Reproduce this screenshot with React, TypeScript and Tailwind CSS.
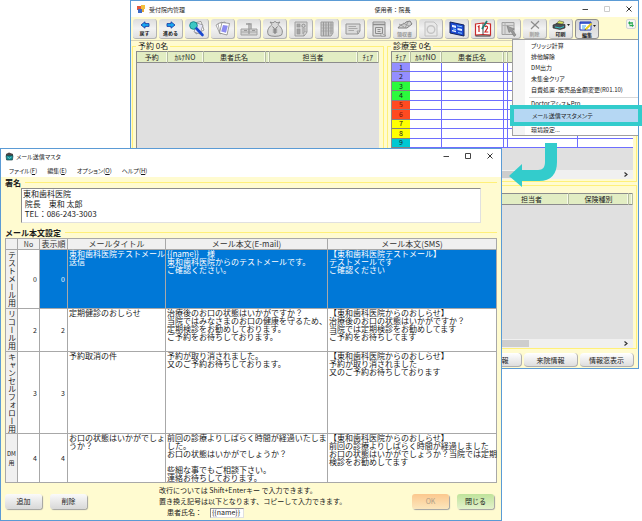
import type { ReactNode } from "react";
import clsx from "clsx";

/* ---------- toolbar icons ---------- */

const Icon = ({ children, w = 20, h = 18 }: { children: ReactNode; w?: number; h?: number }) => (
  <svg width={w} height={h} viewBox={`0 0 ${w} ${h}`} fill="none" aria-hidden="true">
    {children}
  </svg>
);

const ArrowIcon = ({ flip }: { flip?: boolean }) => (
  <Icon w={12} h={8}>
    <g transform={flip ? "translate(12 0) scale(-1 1)" : undefined}>
      <path d="M2 4 L6 .8 V2.6 H10 V5.4 H6 V7.2 Z" fill="#18a8f0" stroke="#1c3fa8" strokeWidth=".9" />
    </g>
  </Icon>
);

const SearchDocIcon = () => (
  <Icon>
    <path d="M7 3 L14 1.5 L17 10 L9 14 Z" fill="#fff" stroke="#777" strokeWidth=".7" />
    <path d="M10 3 L16 5 L13 14 L7 12 Z" fill="#e4e4f8" stroke="#888" strokeWidth=".7" />
    <circle cx="6.5" cy="5.5" r="3.8" fill="#3cc8c4" stroke="#17888c" />
    <path d="M9.5 8.5 L15.5 15" stroke="#1b49cf" strokeWidth="2.6" strokeLinecap="round" />
  </Icon>
);

const DocsIcon = () => (
  <Icon>
    <path d="M3 5 L9 2 L13 11 L7 14 Z" fill="#fff" stroke="#888" strokeWidth=".7" />
    <path d="M5 3.5 L12 2 L14 12 L7 13.5 Z" fill="#fff" stroke="#888" strokeWidth=".7" />
    <path d="M9 2.5 L16.5 3.5 L14 15 L6.5 13 Z" fill="#fff" stroke="#777" strokeWidth=".7" />
    <path d="M10 5 L14.8 5.8 L13 12.8 L8.2 11.6 Z" fill="#8b8bf0" />
  </Icon>
);

const TrayIcon = () => (
  <Icon>
    <path d="M2 9 H18 V15 H2 Z" fill="#d2d2d2" stroke="#a2a2a2" />
    <path d="M2 12 H18" stroke="#a8a8a8" />
    <path d="M10 3 V14 M7 4 H12 V9" stroke="#9c9c9c" strokeWidth="1.4" />
    <path d="M5 10.5 H8 M13 10.5 H16" stroke="#999" />
  </Icon>
);

const MoneyIcon = () => (
  <Icon>
    <path d="M7 4.5 L5 2 L8 2.8 L10 1.4 L12 2.8 L15 2 L13 4.5 C17 8 18.5 11 16.5 15 C14 16.8 6 16.8 3.5 15 C1.5 11 3 8 7 4.5 Z" fill="#d8d8d8" stroke="#858585" strokeWidth=".9" />
    <path d="M7.5 6.5 L10 9.6 L12.5 6.5 M10 9.6 V14 M7.8 10 H12.2 M7.8 12 H12.2" stroke="#777" />
  </Icon>
);

const FormIcon = () => (
  <Icon>
    <path d="M4 2 H16 V12 L13 16 H4 Z" fill="#d4d4d4" stroke="#a0a0a0" />
    <path d="M6 4 H9 V7 H6 Z M6 9 H9 V14 H6 Z" fill="#a4a4a4" stroke="#909090" strokeWidth=".6" />
    <circle cx="12.5" cy="5.8" r="1.6" stroke="#909090" />
    <path d="M11 9 H14.5 M11 11 H14.5 M11 13 H13" stroke="#999" />
    <path d="M13 16 L16 12 H13 Z" fill="#f0f0f0" stroke="#8c8c8c" strokeWidth=".6" />
  </Icon>
);

const ListIcon = () => (
  <Icon>
    <path d="M4 2 H16 V13 L14 16 H4 Z" fill="#c8c8c8" stroke="#9c9c9c" />
    <path d="M6.5 2 V16 M9 2 V16 M11.5 2 V16 M14 2 V14" stroke="#999" />
    <path d="M4 5 H16 M4 8 H16 M4 11 H16" stroke="#a0a0a0" strokeWidth=".6" />
  </Icon>
);

const CardIcon = () => (
  <Icon>
    <path d="M3 4 H17 V11 L15 14 H3 Z" fill="#dadada" stroke="#959595" />
    <path d="M5.5 6.5 H13 M5.5 8.5 H14.5 M5.5 10.5 H11" stroke="#9c9c9c" strokeWidth=".8" />
    <path d="M17 11 H14 L15 14" stroke="#8a8a8a" strokeWidth=".7" />
  </Icon>
);

const ReportIcon = () => (
  <Icon>
    <path d="M4 2 H16 V16 H4 Z" fill="#dcdcdc" stroke="#8c8c8c" />
    <path d="M4 4.5 H16" stroke="#8c8c8c" strokeWidth="1.6" />
    <path d="M6.5 7.5 H13.5 V13.5 H6.5 Z M8.5 9.5 H11.5 M8.5 11.5 H11.5" stroke="#8c8c8c" />
    <path d="M12 13 L17 16 H12 Z" fill="#eee" stroke="#888" strokeWidth=".6" />
  </Icon>
);

const ReceiptIcon = () => (
  <Icon h={10}>
    <path d="M3 8 C6 3 9 5 11 2 L15 1 L17 4 L12 8 Z" fill="#d0d0d0" stroke="#808080" />
    <path d="M4 4 L9 7 M8 3 L14 6 M13 2 L10 8" stroke="#909090" strokeWidth=".8" />
  </Icon>
);

const BlankDocIcon = () => (
  <Icon>
    <path d="M4 2 H13 L16 5 V16 H4 Z" fill="#e8e8e8" stroke="#c0c0c0" />
    <circle cx="10" cy="9.5" r="3.8" stroke="#c4c4c4" strokeWidth="1.4" />
  </Icon>
);

const ScreenIcon = () => (
  <Icon>
    <path d="M3 2 L17 5 V16 L3 13 Z" fill="#1c4ad0" stroke="#14245c" />
    <path d="M5 4.8 L9 5.7 V8 L5 7.1 Z M10.5 8 L15 9 V11 L10.5 10 Z M5 10 L9 10.8 V12.2 L5 11.3 Z" fill="#e6f0ff" />
    <path d="M10 5.8 L15 6.8 M6 9 L9 9.5 M11 12.5 L15 13.3" stroke="#7fc8ff" />
  </Icon>
);

const CalendarIcon = () => (
  <Icon>
    <path d="M2.5 4 L10 3 L17.5 4 V15 L10 14.5 L2.5 15 Z" fill="#fff" stroke="#c92a2a" strokeWidth="1.2" />
    <path d="M10 3.5 V14.5" stroke="#444" />
    <path d="M4.8 7 L6 6 V12 M12 7 C12.5 5.5 15 6 14.5 8 L12 12 H15.3" stroke="#c92020" strokeWidth="1.2" />
    <path d="M14 1 L9 9" stroke="#207f74" strokeWidth="1.7" />
    <path d="M2.5 16 H17.5" stroke="#333" />
  </Icon>
);

const PointerIcon = () => (
  <Icon>
    <path d="M3 2.5 H15 V14.5 H3 Z" fill="#d8d8d8" stroke="#a0a0a0" />
    <path d="M3 5.5 H15 M6 2.5 V14.5" stroke="#b0b0b0" />
    <path d="M8 6 L10 12.5 L11.8 11 L15 16.5 L17 15 L13.3 10 L15.3 9 Z" fill="#999" stroke="#777" strokeWidth=".6" />
  </Icon>
);

const CrossIcon = () => (
  <Icon w={12} h={10}>
    <path d="M2 1.5 L10 8.5 M10 1 L2 9" stroke="#8c8c8c" strokeWidth="1.2" />
  </Icon>
);

const PrinterIcon = () => (
  <Icon h={10}>
    <path d="M5 4 L8 .8 L13 2 L11 5 Z" fill="#d8e45c" stroke="#555" strokeWidth=".6" />
    <path d="M2 5 L6 3.5 L14 4.5 V8 L9 9.5 L2 8 Z" fill="#4b5058" stroke="#222" strokeWidth=".6" />
    <path d="M4 7 L9 8 L13 6.5" stroke="#32c4c4" />
    <path d="M16 4 H19 L17.5 6 Z" fill="#222" />
  </Icon>
);

const EditIcon = () => (
  <Icon h={10}>
    <path d="M3 1 H14 V9 H3 Z" fill="#fff" stroke="#1a3ac0" />
    <path d="M3 2 H14" stroke="#1a3ac0" strokeWidth="1.6" />
    <path d="M5 5 H9 M5 7 H8" stroke="#35a6ee" />
    <path d="M14.5 2.5 L8.5 8.5" stroke="#e8cc20" strokeWidth="2" />
    <path d="M9 9 L7.5 9.2 L8 8" fill="#222" />
    <path d="M16 4 H19 L17.5 6 Z" fill="#222" />
  </Icon>
);

const AppIcon = () => (
  <Icon w={8} h={8}>
    <path d="M0 1 H4 V5 H0 Z" fill="#e2573b" />
    <path d="M4 0 H8 V4 H4 Z" fill="#f2bf3b" />
    <path d="M1 4 H5 V8 H1 Z" fill="#3c69c6" />
    <path d="M5 4 H7 V7 H5 Z" fill="#e9a93a" />
  </Icon>
);

const MailIcon = () => (
  <Icon w={9} h={9}>
    <path d="M1 2 L4 .6 L8 2 V4 H1 Z" fill="#4d4444" />
    <path d="M1 3.6 H8 L7.4 8 H1.6 Z" fill="#138a91" stroke="#1d4448" strokeWidth=".7" />
    <path d="M2.5 5 L4.5 6.4 L6.5 5" stroke="#7ce0e0" strokeWidth=".8" />
  </Icon>
);

/* ---------- shared data ---------- */

type Tool = { name: string; icon: ReactNode; label?: string; muted?: boolean; pressed?: boolean };

const tools: Tool[] = [
  { name: "戻す", icon: <ArrowIcon />, label: "戻す" },
  { name: "進める", icon: <ArrowIcon flip />, label: "進める" },
  { name: "検索", icon: <SearchDocIcon /> },
  { name: "カルテ", icon: <DocsIcon /> },
  { name: "受付", icon: <TrayIcon /> },
  { name: "会計", icon: <MoneyIcon /> },
  { name: "問診", icon: <FormIcon /> },
  { name: "一覧", icon: <ListIcon /> },
  { name: "カード", icon: <CardIcon /> },
  { name: "帳票", icon: <ReportIcon /> },
  { name: "領収書", icon: <ReceiptIcon />, label: "領収書", muted: true },
  { name: "文書", icon: <BlankDocIcon /> },
  { name: "画面", icon: <ScreenIcon /> },
  { name: "予約", icon: <CalendarIcon /> },
  { name: "選択", icon: <PointerIcon /> },
  { name: "削除", icon: <CrossIcon />, label: "削除", muted: true },
  { name: "印刷", icon: <PrinterIcon />, label: "印刷" },
  { name: "編集", icon: <EditIcon />, label: "編集", pressed: true },
];

const chairs = [
  "bg-[#948eff]",
  "bg-[#948eff]",
  "bg-[#2bfa3c]",
  "bg-[#2bfa3c]",
  "bg-[#ff4a20] text-[#7a1000]",
  "bg-[#ff4a20] text-[#7a1000]",
  "bg-[#ffff00]",
  "bg-[#ffff00]",
  "bg-[#00c8d2]",
];

const mails = [
  {
    kind: "テストメール用",
    no: 0,
    height: "h-[59px]",
    title: "東和歯科医院テストメール\n送信",
    email: "{{name}}　様\n東和歯科医院からのテストメールです。\nご確認ください。",
    sms: "【東和歯科医院テストメール】\nテストメールです\nご確認ください",
  },
  {
    kind: "リコール用",
    no: 2,
    height: "h-[43px]",
    title: "定期健診のおしらせ",
    email: "治療後のお口の状態はいかがですか？\n当院ではみなさまのお口の健康を守るため、\n定期検診をお勧めしております。\nご予約をお待ちしております。",
    sms: "【東和歯科医院からのおしらせ】\n治療後のお口の状態はいかがですか？\n当院では定期検診をお勧めしてます\nご予約をお待ちしてます",
  },
  {
    kind: "キャンセルフォロー用",
    no: 3,
    height: "h-[82px]",
    title: "予約取消の件",
    email: "予約が取り消されました。\n又のご予約お待ちしております。",
    sms: "【東和歯科医院からのおしらせ】\n予約が取り消されました\n又のご予約お待ちしております",
  },
  {
    kind: "DM用",
    no: 4,
    height: "h-[48px]",
    title: "お口の状態はいかがでしょ\nうか？",
    email: "前回の診療よりしばらく時間が経過いたしま\nした。\nお口の状態はいかがでしょうか？\n\n些細な事でもご相談下さい。\n連絡お待ちしております。",
    sms: "【東和歯科医院からのおしらせ】\n前回の診療よりしばらく時間が経過しました\nお口の状態はいかがでしょうか？当院では定期\n検診をお勧めしてます",
  },
];

/* ---------- small parts ---------- */

const WindowButtons = ({ dim }: { dim?: boolean }) => (
  <div className="flex gap-3">
    <button type="button" aria-label="最小化">
      <Icon w={10} h={8}>
        <path d="M2.5 4.5 H8" stroke="#444" />
      </Icon>
    </button>
    <button type="button" aria-label="最大化">
      <Icon w={10} h={8}>
        <path d="M2.5 1.5 H7.5 V6.5 H2.5 Z" stroke={dim ? "#ccc" : "#444"} />
      </Icon>
    </button>
    <button type="button" aria-label="閉じる">
      <Icon w={10} h={8}>
        <path d="M2.5 1.5 L7.5 6.5 M7.5 1.5 L2.5 6.5" stroke="#333" />
      </Icon>
    </button>
  </div>
);

const Scrollbar = ({ thumb }: { thumb: string }) => (
  <div className="flex h-[9px] items-center bg-[#f0f0f0]">
    <div className={clsx("h-[7px] bg-[#cdcdcd]", thumb)} />
    <svg width="6" height="7" viewBox="0 0 6 7" fill="none" className="ml-auto mr-1">
      <path d="M1.5 1.5 L4 3.5 L1.5 5.5" stroke="#333" strokeWidth="1.2" />
    </svg>
  </div>
);

const Th = ({ children }: { children?: ReactNode }) => (
  <th className="overflow-hidden border-r border-[#b4bca0] p-0 font-normal shadow-[inset_-1px_0_0_#f6fae8]">{children}</th>
);

const headRow = "h-[11px] border-b border-t border-[#8c8c8c] bg-[#e2edc3]";

const BottomTab = ({ children }: { children: ReactNode }) => (
  <button
    type="button"
    className="h-[14px] w-[54px] rounded-sm border-b border-r border-[#b0b0b0] bg-linear-to-b from-white to-[#dedede] text-[7px] leading-[12px]"
  >
    {children}
  </button>
);

const PushButton = ({ children, tone = "gray" }: { children: ReactNode; tone?: "gray" | "orange" | "green" }) => (
  <button
    type="button"
    disabled={tone === "orange"}
    className={clsx(
      "h-[15px] w-[37px] rounded-[3px] bg-linear-to-b text-[7px] leading-[13px] shadow-[1px_1px_1px_#a0a0a0]",
      tone === "gray" && "from-[#fafafa] to-[#d8d8d8]",
      tone === "orange" && "from-[#fcc88e] to-[#fbe6bc] text-[#b0a088]",
      tone === "green" && "from-[#bfe39a] to-[#e4f2cc]",
    )}
  >
    {children}
  </button>
);

/* ---------- reception window ---------- */

const Toolbar = () => (
  <div className="flex h-6 items-start gap-[2px] border-b border-[#d6d2b4] bg-[#fffbd0] pl-[2px] pt-[2px]">
    {tools.map((tool) => (
      <button
        key={tool.name}
        type="button"
        aria-label={tool.name}
        className={clsx(
          "flex h-5 w-6 shrink-0 flex-col items-center justify-center overflow-hidden rounded-[3px] border-b border-r bg-linear-to-b",
          tool.pressed ? "border border-[#909090] from-[#d4d4d4] to-[#e8e8e8]" : "border-[#b4b4b4] from-[#dcdcdc] via-[#f2f2f2] to-[#e0e0e0]",
        )}
      >
        {tool.icon}
        {tool.label && (
          <span className={clsx("text-[5px] font-bold leading-[7px] whitespace-nowrap", tool.muted && "text-[#999]")}>{tool.label}</span>
        )}
      </button>
    ))}
    <button type="button" aria-label="更新" className="ml-auto mr-[2px] rounded-[2px] border border-[#d4d4d4] bg-[#f5f5f5]">
      <Icon w={8} h={8}>
        <path d="M1 3 L3 1 V2.2 H6 V3.8 H3 V5 Z M7 5.5 L5 3.8 V4.8 H2.5 V6.2 H5 V7.2 Z" fill="#25a84c" />
      </Icon>
    </button>
  </div>
);

const ReservationTable = () => (
  <fieldset className="flex w-[252px] flex-col border border-[#fff07a] pb-1 pl-[3px] pr-1">
    <legend className="px-[2px] text-[8px] leading-[10px]">予約 0名</legend>
    <div className="flex-1 border-l border-[#8c8c8c] bg-[#e0e0e0]">
      <table className="w-full table-fixed border-collapse text-[7px] leading-[9px]">
        <colgroup>
          <col className="w-[30px]" />
          <col className="w-[36px]" />
          <col className="w-[62px]" />
          <col className="w-[4px]" />
          <col className="w-[88px]" />
          <col />
        </colgroup>
        <thead>
          <tr className={headRow}>
            <Th>予約</Th>
            <Th>ｶﾙﾃNO</Th>
            <Th>患者氏名</Th>
            <Th />
            <Th>担当者</Th>
            <Th>ﾁｪｱ</Th>
          </tr>
        </thead>
      </table>
    </div>
  </fieldset>
);

const ChairTable = () => (
  <fieldset className="flex flex-1 flex-col border border-[#fff07a] pb-[2px] pl-[3px] pr-[3px]">
    <legend className="px-[2px] text-[8px] leading-[10px]">診療室 0名</legend>
    <div className="flex flex-1 flex-col border-l border-[#8c8c8c] bg-[#e0e0e0]">
      <table className="h-[97px] w-full table-fixed border-collapse text-[7px] leading-[7px]">
        <colgroup>
          <col className="w-[18px]" />
          <col className="w-[31px]" />
          <col className="w-[62px]" />
          <col className="w-[4px]" />
          <col className="w-[70px]" />
          <col />
        </colgroup>
        <thead>
          <tr className={headRow}>
            <Th>ﾁｪｱ</Th>
            <Th>ｶﾙﾃNO</Th>
            <Th>患者氏名</Th>
            <Th />
            <Th />
            <Th />
          </tr>
        </thead>
        <tbody>
          {chairs.map((color, i) => (
            <tr key={i} className="border-b border-[#6e6eff] bg-white">
              <th className={clsx("border-b border-[#808080] p-0 font-normal", color)}>{i + 1}</th>
              <td className="border-r border-[#6e6eff] p-0" />
              <td className="border-r border-[#6e6eff] p-0" />
              <td className="border-r border-[#6e6eff] p-0" />
              <td className="border-r border-[#6e6eff] p-0" />
              <td className="p-0" />
            </tr>
          ))}
        </tbody>
      </table>
      <div className="flex-1" />
      <Scrollbar thumb="w-[140px]" />
    </div>
  </fieldset>
);

const ReceptionWindow = () => (
  <section className="absolute left-[130px] right-[3px] top-0 flex flex-col border border-[#5b9bd5] bg-[#fffbd0]">
    <header className="flex h-4 items-center gap-1 bg-white pl-[6px] pr-1">
      <AppIcon />
      <h1 className="flex-1 text-[6px]">受付院内管理</h1>
      <p className="flex-1 pl-5 text-[6px]">使用者：院長</p>
      <WindowButtons dim />
    </header>
    <Toolbar />
    <div className="flex h-[141px] gap-[3px] px-[1px]">
      <ReservationTable />
      <ChairTable />
    </div>
    <div className="mx-[1px] mt-[3px] border border-[#fff07a] px-[3px] pt-[7px]">
      <div className="flex h-[155px] flex-col border-l border-[#8c8c8c] bg-[#e0e0e0]">
        <table className="w-full table-fixed border-collapse text-[7px] leading-[9px]">
          <colgroup>
            <col />
            <col className="w-[74px]" />
            <col className="w-[60px]" />
            <col className="w-[4px]" />
          </colgroup>
          <thead>
            <tr className={headRow}>
              <Th>患者氏名</Th>
              <Th>担当者</Th>
              <Th>保険種別</Th>
              <Th />
            </tr>
          </thead>
        </table>
        <div className="flex-1" />
        <Scrollbar thumb="w-[392px]" />
      </div>
    </div>
    <div className="flex justify-end gap-[2px] pb-[1px] pr-1 pt-1">
      <BottomTab>患者情報</BottomTab>
      <BottomTab>来院情報</BottomTab>
      <BottomTab>情報窓表示</BottomTab>
    </div>
  </section>
);

const EditMenu = () => (
  <>
    <ul className="absolute right-1 top-[39px] w-[126px] border border-r-0 border-[#a0a0a0] bg-white text-[6px] leading-[11px] shadow-[inset_12px_0_0_#f4f4f4] [font-feature-settings:'palt'] [&_button]:block [&_button]:h-[11px] [&_button]:pl-[18px]">
      <li><button type="button">ブリッジ計算</button></li>
      <li><button type="button">排他解除</button></li>
      <li><button type="button">DM出力</button></li>
      <li><button type="button">未集金クリア</button></li>
      <li><button type="button">自費処置･販売品金額変更(R01.10)</button></li>
      <li className="ml-4 mt-[2px] h-px bg-[#d8d8d8]" />
      <li><button type="button">DoctorアシストPro</button></li>
      {/* the framed entry covers the edges of its neighbours */}
      <li className="relative -ml-[3px] -mr-1 -mt-1 -mb-[2px] border-4 border-[#33cccc] bg-[#b5d7f3] py-[1px]">
        <button type="button">メール送信マスタメンテ</button>
      </li>
      <li><button type="button">環境設定...</button></li>
    </ul>
    <svg width="50" height="46" viewBox="0 0 50 46" className="absolute right-[84px] top-[142px]">
      <path d="M37 1 H49 V20 C49 32 43 39 31 39 H14 V45 L1 34 L14 22 V28 H30 C35 28 37 25 37 20 Z" fill="#33cccc" />
    </svg>
  </>
);

/* ---------- mail master window ---------- */

const SectionTitle = ({ children }: { children: ReactNode }) => (
  <div className="flex items-center gap-1">
    <h2 className="text-[8px] font-bold leading-[11px]">{children}</h2>
    <span className="h-px flex-1 bg-[#fff07a]" />
  </div>
);

const cell = "whitespace-pre border border-[#a8a8a8] p-0 pl-[1px] align-top";

const MailTable = () => (
  <table className="w-full table-fixed border-collapse border-l border-t border-[#8c8c8c] bg-white text-[8px] leading-[8px]">
    <colgroup>
      <col className="w-[12px]" />
      <col className="w-[22px]" />
      <col className="w-[28px]" />
      <col className="w-[98px]" />
      <col className="w-[162px]" />
      <col />
    </colgroup>
    <thead>
      <tr className="h-[11px] bg-[#f0f0f0] text-[#333] [&>th]:border [&>th]:border-[#a8a8a8] [&>th]:p-0 [&>th]:font-normal">
        <th />
        <th className="text-[7px]">No</th>
        <th>表示順</th>
        <th>メールタイトル</th>
        <th>メール本文(E-mail)</th>
        <th>メール本文(SMS)</th>
      </tr>
    </thead>
    <tbody>
      {mails.map((mail) => {
        const selected = mail.no === 0;
        return (
          <tr key={mail.no} className={mail.height}>
            <th className="border border-[#a8a8a8] bg-[#f0f0f0] p-0 font-normal">
              {mail.kind === "DM用" ? (
                <span className="block text-[6px] leading-[9px]">
                  DM
                  <br />用
                </span>
              ) : (
                <span className="inline-block whitespace-nowrap align-middle [writing-mode:vertical-rl]">{mail.kind}</span>
              )}
            </th>
            <td className="border border-[#a8a8a8] p-0 pr-[2px] text-right text-[7px]">{mail.no}</td>
            <td className={clsx("border border-[#a8a8a8] p-0 pr-[2px] text-right text-[7px]", selected && "bg-[#0078d7] text-white")}>{mail.no}</td>
            <td className={clsx(cell, selected && "bg-[#0078d7] text-white")}>{mail.title}</td>
            <td className={clsx(cell, selected && "bg-[#0078d7] text-white")}>{mail.email}</td>
            <td className={clsx(cell, selected && "bg-[#0078d7] text-white")}>{mail.sms}</td>
          </tr>
        );
      })}
    </tbody>
  </table>
);

const MailWindow = () => (
  <section className="absolute left-0 top-[148px] w-[502px] border border-[#5b9bd5] bg-[#fffbd0]">
    <div className="bg-white [font-feature-settings:'palt']">
      <header className="flex h-[14px] items-center gap-[2px] pl-1 pr-[6px]">
        <MailIcon />
        <h1 className="flex-1 text-[6px]">メール送信マスタ</h1>
        <WindowButtons />
      </header>
      <nav className="flex h-[14px] items-center gap-[10px] pl-2 text-[6px]">
        <button type="button">ファイル(<u>F</u>)</button>
        <button type="button">編集(<u>E</u>)</button>
        <button type="button">オプション(<u>O</u>)</button>
        <button type="button">ヘルプ(<u>H</u>)</button>
      </nav>
    </div>
    <div className="px-1">
      <SectionTitle>署名</SectionTitle>
      <textarea
        aria-label="署名"
        className="mb-1 ml-4 block h-[35px] w-[460px] resize-none overflow-hidden border border-[#e0e0e0] border-l-[#8c8c8c] border-t-[#8c8c8c] bg-white px-[1px] text-[8px] leading-[10px]"
        defaultValue={"東和歯科医院\n 院長　東和 太郎\n TEL：086-243-3003"}
      />
      <SectionTitle>メール本文設定</SectionTitle>
      <MailTable />
    </div>
    <footer className="flex items-center gap-2 pl-1 pr-[7px] pt-[2px] pb-[2px]">
      <PushButton>追加</PushButton>
      <PushButton>削除</PushButton>
      <div className="flex-1 pl-16 text-[7px] leading-[11px]">
        <p>改行については Shift+Enterキー で入力できます。</p>
        <p>置き換え記号は以下となります、コピーして入力できます。</p>
        <label className="flex items-center gap-2 pl-2">
          患者氏名：
          <input
            readOnly
            defaultValue="{{name}}"
            className="h-[10px] w-[34px] border border-[#e0e0e0] border-l-[#8c8c8c] border-t-[#8c8c8c] bg-white px-[1px] text-[7px]"
          />
        </label>
      </div>
      <PushButton tone="orange">OK</PushButton>
      <PushButton tone="green">閉じる</PushButton>
    </footer>
  </section>
);

export default function App() {
  return (
    <main className="relative min-h-[521px] w-full overflow-hidden bg-white font-['Noto_Sans_CJK_JP',sans-serif] text-[#1a1a1a]">
      <ReceptionWindow />
      <EditMenu />
      <MailWindow />
    </main>
  );
}
